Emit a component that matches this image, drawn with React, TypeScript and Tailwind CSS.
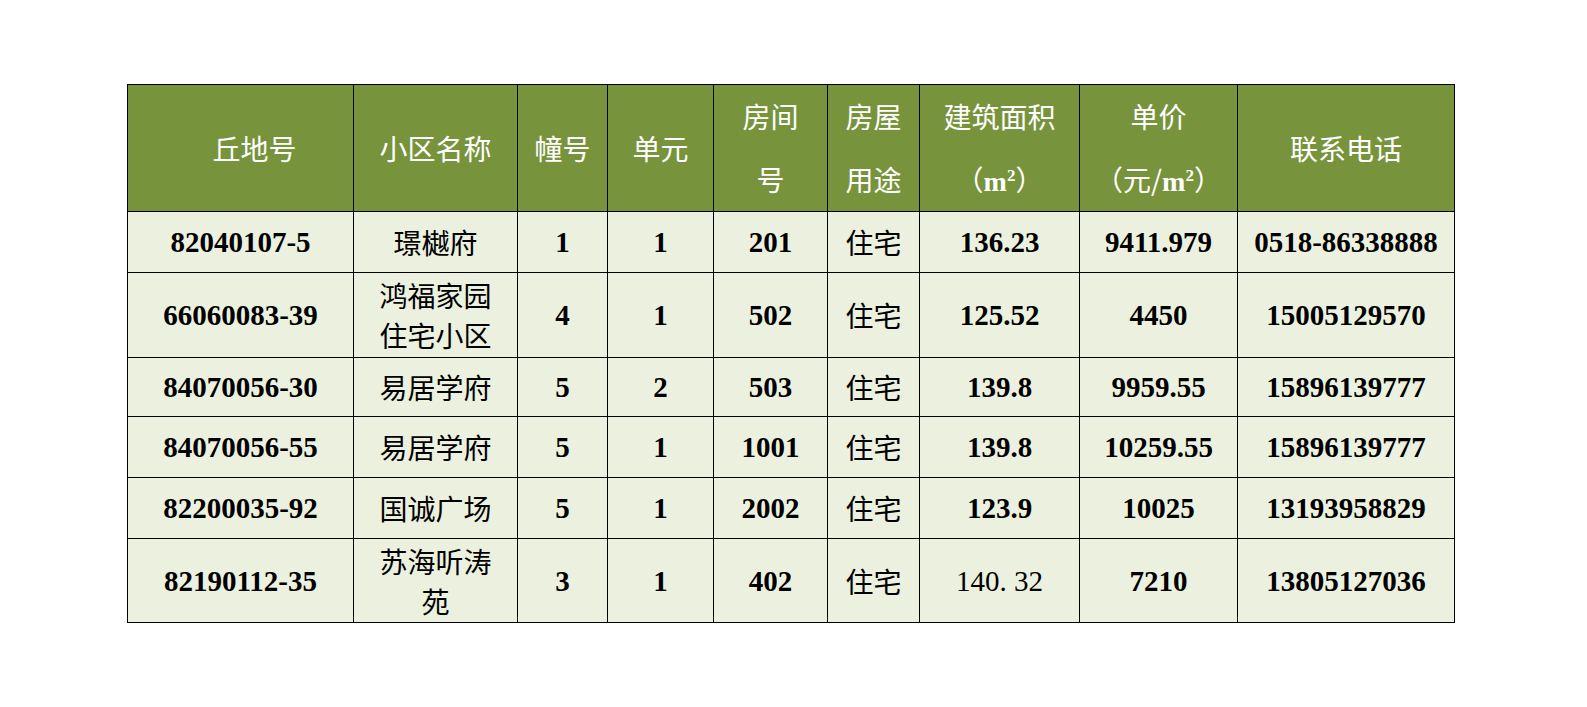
const serif = "font-['Liberation_Serif','Noto_Sans_CJK_SC',serif]";
const cjk = "font-['Noto_Sans_CJK_SC','Liberation_Serif',sans-serif]";

const rows = [
  { id: "82040107-5", name: ["璟樾府"], bld: "1", unit: "1", room: "201", area: "136.23", price: "9411.979", tel: "0518-86338888", h: "h-[61px]" },
  { id: "66060083-39", name: ["鸿福家园", "住宅小区"], bld: "4", unit: "1", room: "502", area: "125.52", price: "4450", tel: "15005129570", h: "h-[85px]" },
  { id: "84070056-30", name: ["易居学府"], bld: "5", unit: "2", room: "503", area: "139.8", price: "9959.55", tel: "15896139777", h: "h-[59px]" },
  { id: "84070056-55", name: ["易居学府"], bld: "5", unit: "1", room: "1001", area: "139.8", price: "10259.55", tel: "15896139777", h: "h-[61px]" },
  { id: "82200035-92", name: ["国诚广场"], bld: "5", unit: "1", room: "2002", area: "123.9", price: "10025", tel: "13193958829", h: "h-[61px]" },
  { id: "82190112-35", name: ["苏海听涛", "苑"], bld: "3", unit: "1", room: "402", area: "140. 32", price: "7210", tel: "13805127036", h: "h-[84px]", plainArea: true },
];

const th = `border border-black bg-[#77933c] text-white font-normal text-[28px] leading-[63px] text-center align-middle p-0 ${cjk}`;
const td = "border border-black text-center align-middle p-0 text-black";
const num = `${td} ${serif} font-bold text-[29px] leading-[40px]`;
const zh = `${td} ${cjk} font-normal text-[28px] leading-[40px]`;

const Sq = () => (
  <>
    <span className={`${serif} font-bold leading-none`}>m</span>
    <span className={`${serif} font-bold text-[17px] leading-none relative -top-[10px]`}>2</span>
  </>
);

export default function App() {
  return (
    <div className="min-h-screen w-full bg-white pt-[84px] pl-[127px]">
      <table className="table-fixed border-collapse w-[1327px]">
        <colgroup>
          <col className="w-[226px]" />
          <col className="w-[164px]" />
          <col className="w-[90px]" />
          <col className="w-[106px]" />
          <col className="w-[114px]" />
          <col className="w-[92px]" />
          <col className="w-[160px]" />
          <col className="w-[158px]" />
          <col className="w-[217px]" />
        </colgroup>
        <thead>
          <tr className="h-[127px]">
            <th className={`${th} pl-[28px]`}>丘地号</th>
            <th className={th}>小区名称</th>
            <th className={th}>幢号</th>
            <th className={th}>单元</th>
            <th className={th}>
              <div className="h-[63px]">房间</div>
              <div className="h-[63px]">号</div>
            </th>
            <th className={th}>
              <div className="h-[63px]">房屋</div>
              <div className="h-[63px]">用途</div>
            </th>
            <th className={th}>
              <div className="h-[63px]">建筑面积</div>
              <div className="h-[63px] overflow-hidden">（<Sq />）</div>
            </th>
            <th className={th}>
              <div className="h-[63px]">单价</div>
              <div className="h-[63px] overflow-hidden">（元/<Sq />）</div>
            </th>
            <th className={th}>联系电话</th>
          </tr>
        </thead>
        <tbody className="bg-[#ebf1de]">
          {rows.map((r) => (
            <tr key={r.id} className={r.h}>
              <td className={num}>{r.id}</td>
              <td className={zh}>
                {r.name.map((n, i) => (
                  <div key={i}>{n}</div>
                ))}
              </td>
              <td className={num}>{r.bld}</td>
              <td className={num}>{r.unit}</td>
              <td className={num}>{r.room}</td>
              <td className={zh}>住宅</td>
              {r.plainArea ? (
                <td className={`${td} ${serif} font-normal text-[29px] leading-[40px]`}>{r.area}</td>
              ) : (
                <td className={num}>{r.area}</td>
              )}
              <td className={num}>{r.price}</td>
              <td className={num}>{r.tel}</td>
            </tr>
          ))}
        </tbody>
      </table>
    </div>
  );
}
